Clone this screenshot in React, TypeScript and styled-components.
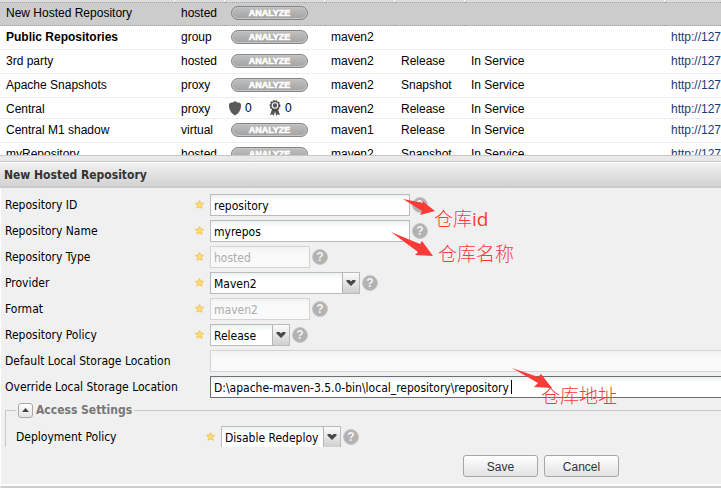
import React from "react";
import styled, { createGlobalStyle, css } from "styled-components";

const GlobalStyle = createGlobalStyle`
  *, *::before, *::after { box-sizing: border-box; }
  html, body { margin: 0; overflow: hidden; background: #fff; }
`;

const formFont = `"DejaVu Sans Condensed", Tahoma, "Noto Sans", sans-serif`;
const gridFont = `"Liberation Sans", Arial, sans-serif`;

const Page = styled.div`
  display: flex;
  flex-direction: column;
  height: 100vh;
  padding-bottom: 7px;
  color: #000;
  font: 12px/16px ${formFont};
`;

/* ---------- repository grid ---------- */

const GridPane = styled.section`
  flex: none;
  height: 156px;
  overflow: hidden;
  border-bottom: 1px solid #c8c8c8;
  background: #fff;
`;

const RepoTable = styled.table`
  width: 865px;
  table-layout: fixed;
  border-collapse: separate;
  border-spacing: 0;
  font: 12px/16px ${gridFont};
`;

const HeadCell = styled.th`
  height: 2px;
  padding: 0;
  background: #dcdcdc;
  border-right: 1px solid #fff;
`;

const Row = styled.tr<{ $selected?: boolean; $short?: boolean }>`
  height: ${(p) => (p.$short ? 21 : 24)}px;
  background: ${(p) => (p.$selected ? "#cccccc" : "#fff")};
  td {
    padding: ${(p) => (p.$selected ? 2 : 3)}px 6px 0;
    vertical-align: top;
    white-space: nowrap;
    border-bottom: 1px solid #ededed;
    ${(p) =>
      p.$selected &&
      css`
        border-top: 1px dotted #a3a3a3;
        border-bottom: 1px dotted #a3a3a3;
      `}
  }
`;

const Name = styled.span<{ $bold?: boolean }>`
  font-weight: ${(p) => (p.$bold ? 700 : 400)};
`;

const RepoLink = styled.a`
  color: #1c3a78;
  text-decoration: none;
`;

const AnalyzeButton = styled.button`
  display: block;
  width: 77px;
  height: 14px;
  margin-top: 1px;
  padding: 1px 0 0;
  border: 1px solid #858585;
  border-radius: 7px;
  background: linear-gradient(#c0c0c0, #a2a2a2);
  box-shadow: inset 0 0 0 1px #c6c6c6;
  color: #fff;
  font: 700 9px/11px ${gridFont};
  text-align: center;
  -webkit-text-stroke: 0.5px #fff;
`;

const Counts = styled.div`
  display: flex;
  align-items: center;
  height: 16px;
  margin: -1px 0 0 -2px;
`;

const Count = styled.span`
  display: flex;
  align-items: center;
  gap: 4px;
  width: 40px;
`;

const ShieldIcon = () => (
  <svg width="12" height="15" viewBox="0 0 12 15" aria-hidden="true">
    <path d="M6 0Q7.500 2 11 1.800L12 3.500Q12.600 10.500 6 14.600Q-.6 10.500 0 3.500L1 1.800Q4.500 2 6 0Z" fill="#5a5a5a" />
  </svg>
);

const RibbonIcon = () => (
  <svg width="12" height="16" viewBox="0 0 12 16" aria-hidden="true">
    <path d="M3 9L1 15.300L3.300 14.300L4.700 16L6 11.500L7.300 16L8.700 14.300L11 15.300L9 9Z" fill="#555" />
    <circle cx="6" cy="5.500" r="4.600" fill="#666" stroke="#3f3f3f" strokeWidth="1.600" strokeDasharray="1.800 .9" />
    <circle cx="6" cy="5.500" r="2.700" fill="#555" stroke="#f2f2f2" strokeWidth="1.100" />
  </svg>
);

/* ---------- form ---------- */

const Splitter = styled.div`
  flex: none;
  height: 6px;
  background: #e9e9e9;
  border-bottom: 1px solid #c8c8c8;
`;

const Title = styled.h1`
  flex: none;
  margin: 0;
  height: 26px;
  padding: 3px 4px 0;
  border-top: 1px solid #fff;
  border-bottom: 2px solid #cbcbcb;
  background: linear-gradient(#f1f1f1, #d2d2d2);
  color: #333;
  font: 700 12px/18px ${formFont};
`;

const Form = styled.form`
  display: flex;
  flex: 1;
  flex-direction: column;
  min-height: 0;
  border-left: 1px solid #fff;
  border-bottom: 2px solid #cdcdcd;
  background: #f0f0f0;
  box-shadow: inset 0 -2px #fcfcfc;
`;

const FormBody = styled.div`
  flex: 1;
  min-height: 0;
  overflow: hidden;
  padding: 6px 0 0 4px;
`;

const FormRow = styled.div`
  display: grid;
  grid-template-columns: 190px 15px 1fr;
  height: 26px;
`;

const Label = styled.label`
  padding-top: 3px;
  white-space: nowrap;
`;

const Star = styled.svg`
  width: 9px;
  height: 9px;
  margin-top: 6px;
`;

const Field = styled.div`
  position: relative;
  display: flex;
  align-items: flex-start;
  gap: 2px;
`;

const box = css`
  height: 22px;
  margin: 0;
  padding: 1px 3px 0;
  border: 1px solid #b8bbbf;
  border-radius: 0;
  outline: none;
  background: linear-gradient(#edf1f1, #fff 6px);
  color: #000;
  font: 12px/18px ${formFont};
`;

const TextInput = styled.input<{ $size: "short" | "long" | "fill"; $active?: boolean }>`
  ${box}
  width: ${(p) => ({ short: "100px", long: "200px", fill: "100%" })[p.$size]};
  border-color: ${(p) => (p.$active ? "#6e6e6e" : "#b8bbbf")};
  border-right-width: ${(p) => (p.$size === "fill" ? 0 : 1)}px;
  &:disabled {
    border-color: #d2d4d5;
    background: linear-gradient(#f0f2f2, #f9f9f9 6px);
    color: #adadad;
  }
`;

const SelectWrap = styled.div<{ $width: number }>`
  position: relative;
  width: ${(p) => p.$width}px;
`;

const Select = styled.select`
  ${box}
  display: block;
  width: 100%;
  appearance: none;
`;

const Trigger = styled.svg`
  position: absolute;
  top: 1px;
  right: 1px;
  width: 17px;
  height: 20px;
  border-left: 1px solid #b4b4b4;
  background: linear-gradient(#fbfbfb, #cfcfcf);
  pointer-events: none;
`;

const Help = styled.button`
  flex: none;
  width: 16px;
  height: 16px;
  margin-top: 3px;
  padding: 0;
  border: 1px solid #c6c6c6;
  border-radius: 50%;
  background: #b2b2b2;
  color: #f4f4f4;
  font: 700 12px/14px ${gridFont};
  text-align: center;
`;

const Caret = styled.span`
  position: absolute;
  top: 4px;
  left: 301px;
  width: 1px;
  height: 14px;
  background: #000;
`;

const FieldSet = styled.fieldset`
  min-width: 0;
  margin: 0;
  padding: 8px 0 10px 10px;
  border: solid #c8c8c8;
  border-width: 1px 0 0 1px;
`;

const Legend = styled.legend`
  display: flex;
  align-items: center;
  gap: 3px;
  height: 16px;
  padding: 0 2px;
  color: #777;
  font: 700 12px/16px ${formFont};
`;

const Collapse = styled.button`
  display: flex;
  align-items: center;
  justify-content: center;
  width: 15px;
  height: 15px;
  padding: 0;
  border: 1px solid #a8a8a8;
  border-radius: 3px;
  background: linear-gradient(#fff, #e2e2e2);
`;

const Footer = styled.div`
  display: flex;
  flex: none;
  justify-content: center;
  gap: 6px;
  height: 39px;
  padding: 8px 0 0 360px;
`;

const PushButton = styled.button`
  width: 75px;
  height: 22px;
  padding: 1px 0 0;
  border: 1px solid #a6a6a6;
  border-radius: 3px;
  background: linear-gradient(#fff, #e3e3e3);
  color: #333;
  font: 12px/20px ${gridFont};
`;

/* ---------- callouts ---------- */

const Note = styled.span<{ $x: number; $y: number }>`
  position: absolute;
  z-index: 2;
  left: ${(p) => p.$x}px;
  top: ${(p) => p.$y}px;
  color: #fc3a36;
  font: 300 19px/22px "Open Sans", "Noto Sans CJK SC", sans-serif;
  white-space: nowrap;
`;

const NoteLatin = styled.span`
  font-weight: 400;
`;

const ArrowSvg = styled.svg<{ $x: number; $y: number }>`
  position: absolute;
  z-index: 2;
  left: ${(p) => p.$x}px;
  top: ${(p) => p.$y}px;
  overflow: visible;
`;

const Arrow = ({ x, y, points }: { x: number; y: number; points: string }) => (
  <ArrowSvg $x={x} $y={y} width="42" height="26" aria-hidden="true">
    <polygon points={points} fill="#fb3b38" />
  </ArrowSvg>
);

const RequiredStar = () => (
  <Star viewBox="0 0 10 10" aria-hidden="true">
    <path
      d="M5 .5L6.400 3.400L9.600 3.800L7.300 6L7.900 9.200L5 7.700L2.100 9.200L2.700 6L.4 3.800L3.600 3.400Z"
      fill="#fbdc78"
      stroke="#f2c14c"
      strokeWidth=".9"
    />
  </Star>
);

const HelpMark = () => (
  <Help type="button" aria-label="Help">
    ?
  </Help>
);

type LineProps = { id: string; label: string; required?: boolean; children: React.ReactNode };

const Line = ({ id, label, required = true, children }: LineProps) => (
  <FormRow>
    <Label htmlFor={id}>{label}</Label>
    {required ? <RequiredStar /> : <span />}
    <Field>{children}</Field>
  </FormRow>
);

const Combo = ({ id, value, width }: { id: string; value: string; width: number }) => (
  <SelectWrap $width={width}>
    <Select id={id} defaultValue={value}>
      <option>{value}</option>
    </Select>
    <Trigger viewBox="0 0 16 20" aria-hidden="true">
      <path d="M3.500 7h3l1.500 1.500l1.500-1.500h3v1.500l-4.500 4.500l-4.500-4.500z" fill="#484848" />
    </Trigger>
  </SelectWrap>
);

type Repo = { name: string; type: string; format?: string; policy?: string; status?: string };

const repos: Repo[] = [
  { name: "New Hosted Repository", type: "hosted" },
  { name: "Public Repositories", type: "group", format: "maven2" },
  { name: "3rd party", type: "hosted", format: "maven2", policy: "Release", status: "In Service" },
  { name: "Apache Snapshots", type: "proxy", format: "maven2", policy: "Snapshot", status: "In Service" },
  { name: "Central", type: "proxy", format: "maven2", policy: "Release", status: "In Service" },
  { name: "Central M1 shadow", type: "virtual", format: "maven1", policy: "Release", status: "In Service" },
  { name: "myRepository", type: "hosted", format: "maven2", policy: "Snapshot", status: "In Service" },
];

const columns = [175, 50, 100, 70, 70, 200, 200];

export default function App() {
  return (
    <Page>
      <GlobalStyle />
      <GridPane>
        <RepoTable>
          <colgroup>
            {columns.map((w, i) => (
              <col key={i} width={w} />
            ))}
          </colgroup>
          <thead>
            <tr>
              {columns.map((_, i) => (
                <HeadCell key={i} />
              ))}
            </tr>
          </thead>
          <tbody>
            {repos.map((r, i) => (
              <Row key={r.name} $selected={i === 0} $short={r.name === "Central"}>
                <td>
                  <Name $bold={r.type === "group"}>{r.name}</Name>
                </td>
                <td>{r.type}</td>
                <td>
                  {r.name === "Central" ? (
                    <Counts>
                      <Count>
                        <ShieldIcon />0
                      </Count>
                      <Count>
                        <RibbonIcon />0
                      </Count>
                    </Counts>
                  ) : (
                    <AnalyzeButton type="button">ANALYZE</AnalyzeButton>
                  )}
                </td>
                <td>{r.format}</td>
                <td>{r.policy}</td>
                <td>{r.status}</td>
                <td>{r.format && <RepoLink href="#">http://127</RepoLink>}</td>
              </Row>
            ))}
          </tbody>
        </RepoTable>
      </GridPane>
      <Splitter />
      <Title>New Hosted Repository</Title>
      <Form onSubmit={(e) => e.preventDefault()}>
        <FormBody>
          <Line id="repo-id" label="Repository ID">
            <TextInput id="repo-id" $size="long" defaultValue="repository" />
            <HelpMark />
            <Arrow x={193} y={5} points="0,0 20,4 18,1 32,12 17,16 19,12" />
            <Note $x={224} $y={14}>
              仓库<NoteLatin>id</NoteLatin>
            </Note>
          </Line>
          <Line id="repo-name" label="Repository Name">
            <TextInput id="repo-name" $size="long" defaultValue="myrepos" />
            <HelpMark />
            <Arrow x={181} y={12} points="0,0 29,12 31,9 42,24 24,23 27,20" />
            <Note $x={228} $y={23}>仓库名称</Note>
          </Line>
          <Line id="repo-type" label="Repository Type">
            <TextInput id="repo-type" $size="short" defaultValue="hosted" disabled />
            <HelpMark />
          </Line>
          <Line id="provider" label="Provider">
            <Combo id="provider" value="Maven2" width={150} />
            <HelpMark />
          </Line>
          <Line id="format" label="Format">
            <TextInput id="format" $size="short" defaultValue="maven2" disabled />
            <HelpMark />
          </Line>
          <Line id="policy" label="Repository Policy">
            <Combo id="policy" value="Release" width={80} />
            <HelpMark />
          </Line>
          <Line id="default-location" label="Default Local Storage Location" required={false}>
            <TextInput id="default-location" $size="fill" disabled />
          </Line>
          <Line id="override-location" label="Override Local Storage Location" required={false}>
            <TextInput
              id="override-location"
              $size="fill"
              $active
              defaultValue={"D:\\apache-maven-3.5.0-bin\\local_repository\\repository"}
            />
            <Caret />
            <Arrow x={302} y={-8} points="0,0 26,9 29,6 40,20 22,19 26,15" />
            <Note $x={331} $y={9}>仓库地址</Note>
          </Line>
          <FieldSet>
            <Legend>
              <Collapse type="button" aria-label="Collapse Access Settings">
                <svg width="7" height="4" viewBox="0 0 7 4" aria-hidden="true">
                  <path d="M0 4L3.500 0L7 4z" fill="#444" />
                </svg>
              </Collapse>
              Access Settings
            </Legend>
            <Line id="deployment" label="Deployment Policy">
              <Combo id="deployment" value="Disable Redeploy" width={120} />
              <HelpMark />
            </Line>
          </FieldSet>
        </FormBody>
        <Footer>
          <PushButton type="submit">Save</PushButton>
          <PushButton type="button">Cancel</PushButton>
        </Footer>
      </Form>
    </Page>
  );
}
